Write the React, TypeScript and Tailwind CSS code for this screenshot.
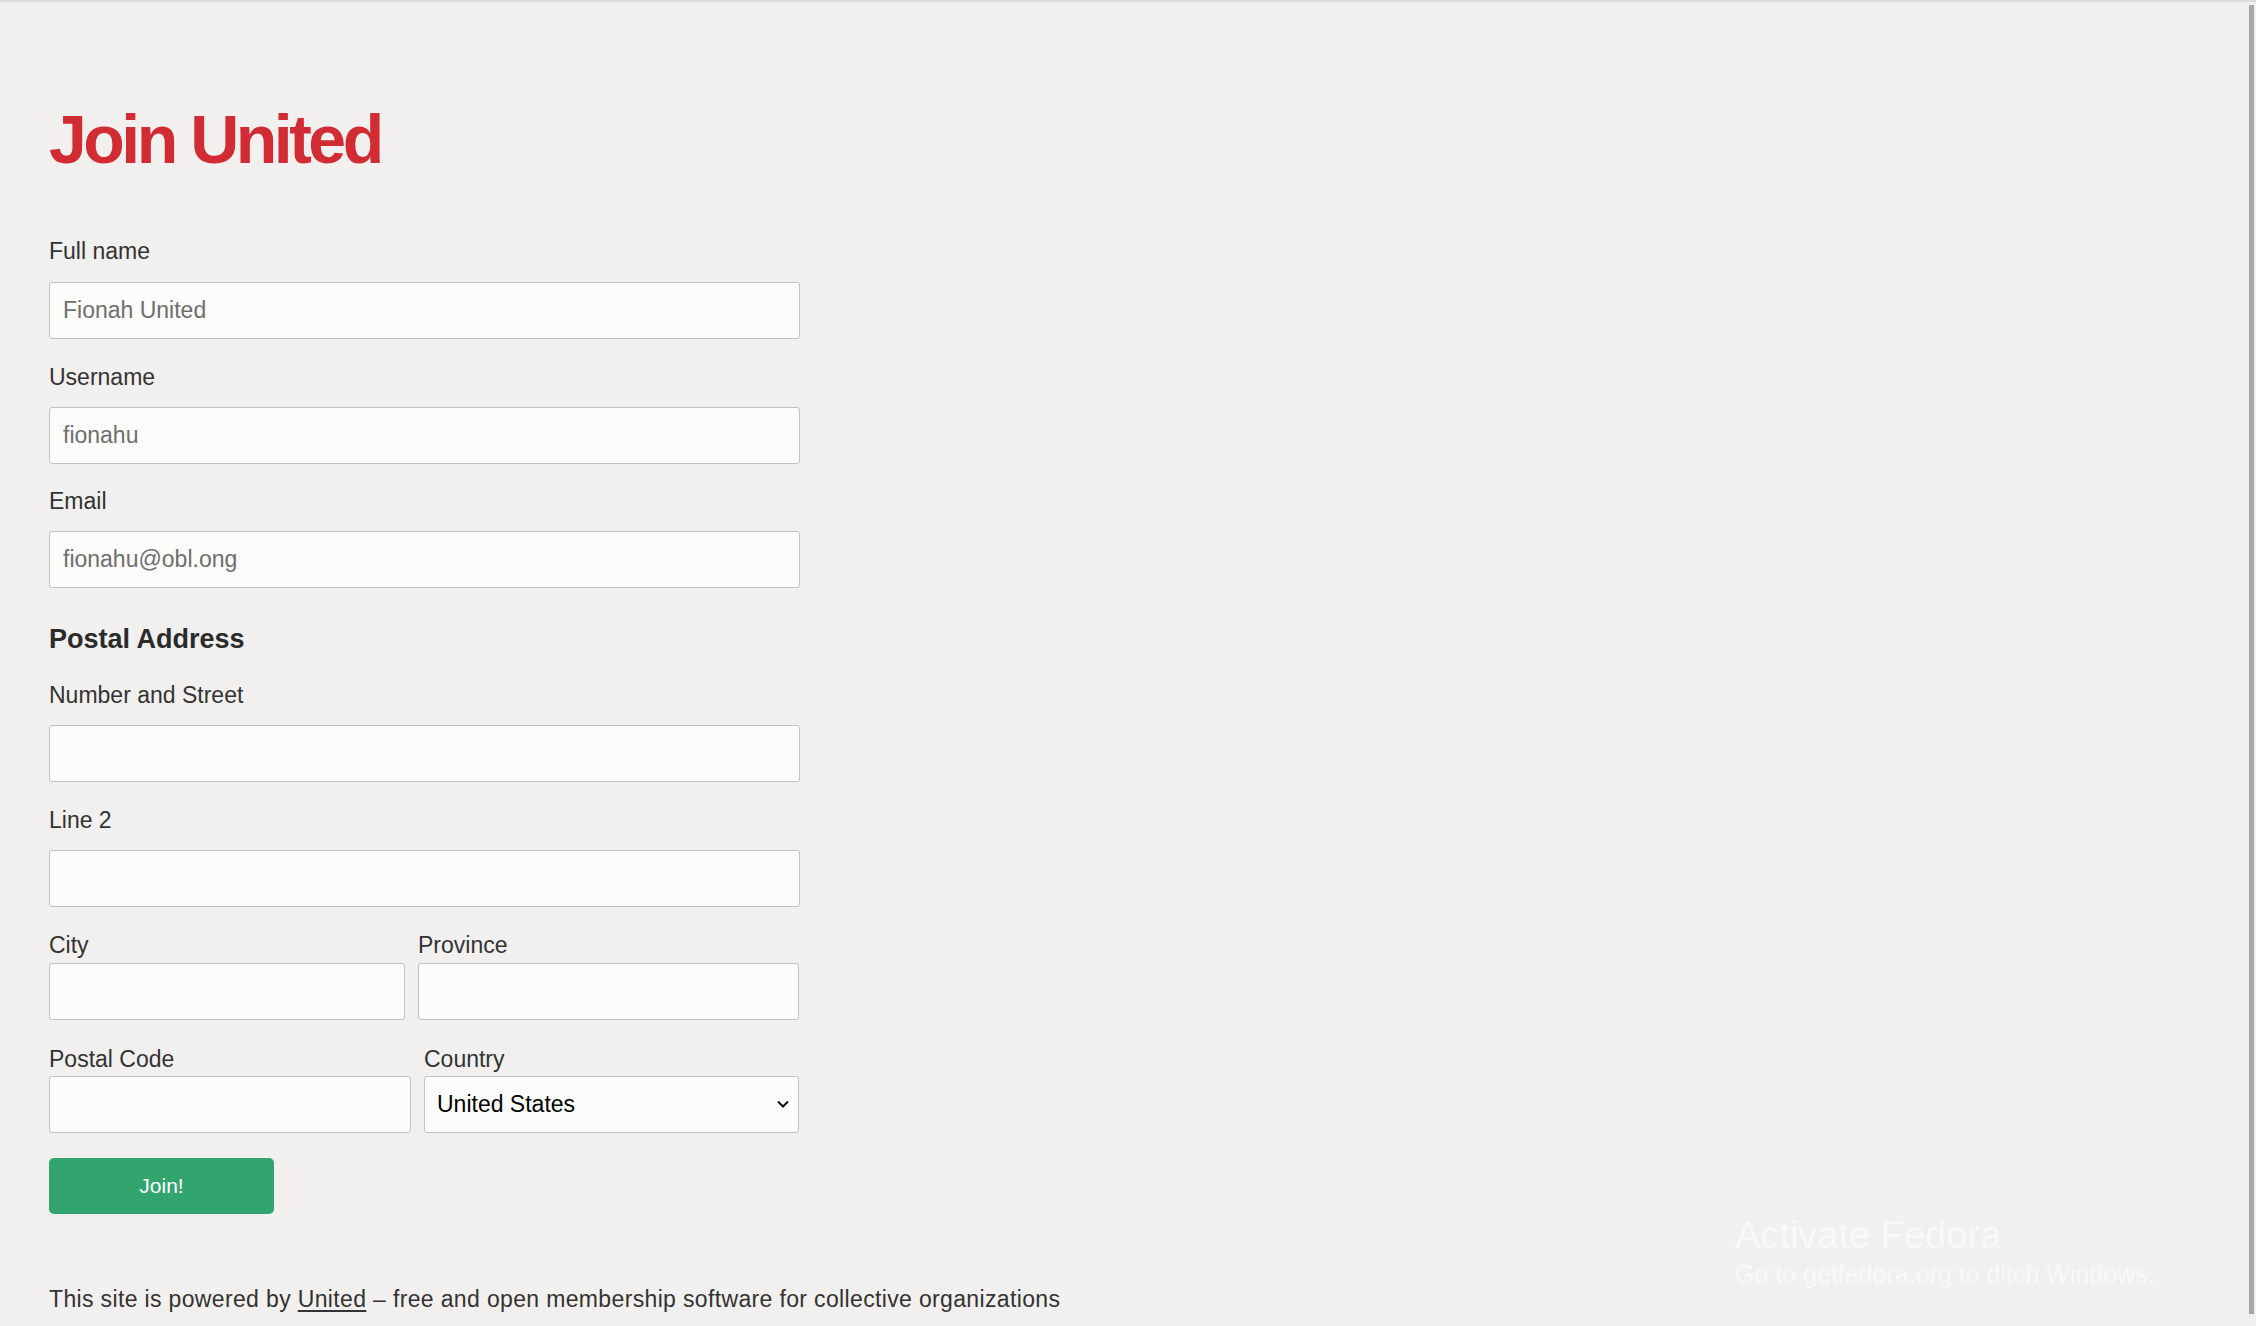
import type { ReactNode } from 'react';

const font = "font-['Liberation_Sans',Arial,sans-serif]";

function Etiqueta({ children, className = '' }: { children: ReactNode; className?: string }) {
  return <label className={`block text-[23px] leading-[28px] text-[#333333] ${className}`}>{children}</label>;
}

function Campo({ placeholder, className = '' }: { placeholder?: string; className?: string }) {
  return (
    <input
      type="text"
      placeholder={placeholder}
      className={`block h-[57px] rounded-[3px] border border-[#c3c2bf] bg-[#fcfcfa] px-[13px] text-[23px] text-[#333] placeholder:text-[#6e6e6e] outline-none ${className}`}
    />
  );
}

export default function App() {
  return (
    <div className={`relative min-h-screen border-t-2 border-[#dddcda] bg-[#f1f0ee] ${font}`}>
      <main className="pl-[49px] pt-[103px] pb-[14px]">
        <h1 className="text-[68px] leading-[68px] font-bold tracking-[-3.5px] text-[#d12b33]">Join United</h1>

        <form className="mt-[64px] w-[751px]" onSubmit={(e) => e.preventDefault()}>
          <Etiqueta>Full name</Etiqueta>
          <Campo placeholder="Fionah United" className="mt-[17px] w-full" />

          <Etiqueta className="mt-[24px]">Username</Etiqueta>
          <Campo placeholder="fionahu" className="mt-[16px] w-full" />

          <Etiqueta className="mt-[23px]">Email</Etiqueta>
          <Campo placeholder="fionahu@obl.ong" className="mt-[16px] w-full" />

          <h2 className="mt-[35px] text-[27px] leading-[32px] font-bold text-[#2b2b2b]">Postal Address</h2>

          <Etiqueta className="mt-[26px]">Number and Street</Etiqueta>
          <Campo className="mt-[16px] w-full" />

          <Etiqueta className="mt-[24px]">Line 2</Etiqueta>
          <Campo className="mt-[16px] w-full" />

          <div className="mt-[24px] grid grid-cols-[356px_381px] gap-x-[13px]">
            <Etiqueta>City</Etiqueta>
            <Etiqueta>Province</Etiqueta>
            <Campo className="mt-[4px] w-full" />
            <Campo className="mt-[4px] w-full" />
          </div>

          <div className="mt-[25px] grid grid-cols-[362px_375px] gap-x-[13px]">
            <Etiqueta>Postal Code</Etiqueta>
            <Etiqueta>Country</Etiqueta>
            <Campo className="mt-[3px] w-full" />
            <div className="relative mt-[3px]">
              <select
                defaultValue="US"
                className="block h-[57px] w-full appearance-none rounded-[3px] border border-[#c3c2bf] bg-[#fcfcfa] pl-[12px] pr-[30px] text-[23px] text-black outline-none"
              >
                <option value="US">United States</option>
                <option value="CA">Canada</option>
                <option value="MX">Mexico</option>
              </select>
              <svg
                className="pointer-events-none absolute right-[10px] top-[24px] h-[8px] w-[12px]"
                viewBox="0 0 12 8"
                fill="none"
                stroke="#111"
                strokeWidth="2"
              >
                <path d="M1 1.5 6 6.5 11 1.5" />
              </svg>
            </div>
          </div>

          <button
            type="submit"
            className="mt-[25px] block h-[56px] w-[225px] rounded-[5px] bg-[#32a56f] text-[21px] text-white"
          >
            Join!
          </button>
        </form>

        <p className="mt-[71px] text-[23px] leading-[28px] tracking-[0.35px] text-[#333333]">
          This site is powered by <a href="#" className="underline underline-offset-[3px]">United</a> – free and open
          membership software for collective organizations
        </p>
      </main>

      {/* overlay scrollbar */}
      <div className="absolute right-[2px] top-[3px] h-[1309px] w-[5px] bg-[#a6a6a6]" />

      {/* desktop watermark */}
      <div className="pointer-events-none absolute left-[1735px] top-[1210px] text-[#f8f8f7]">
        <div className="text-[38px] leading-[46px]">Activate Fedora</div>
        <div className="text-[25px] leading-[32px]">Go to getfedora.org to ditch Windows.</div>
      </div>
    </div>
  );
}
